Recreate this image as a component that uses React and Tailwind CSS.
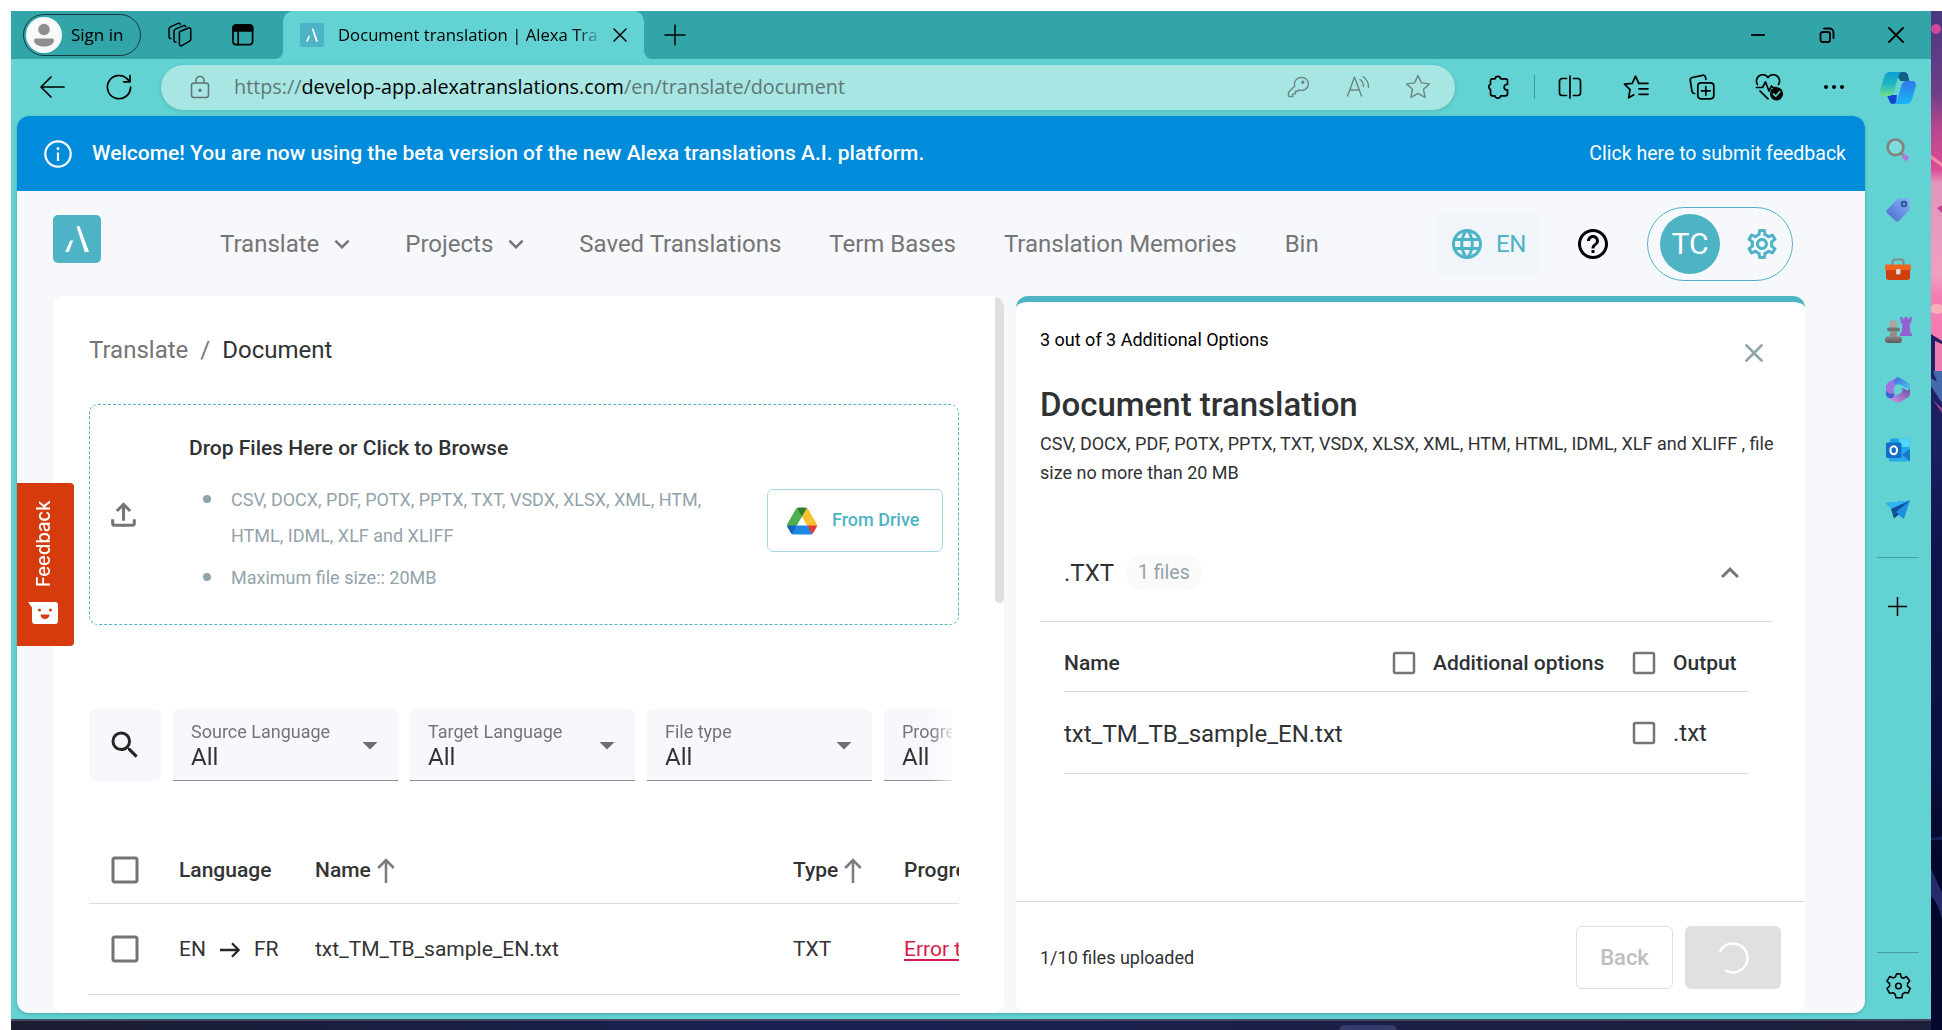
import {
  MdExpandMore, MdExpandLess, MdLanguage, MdHelpOutline, MdOutlineSettings, MdSearch,
  MdArrowDropDown, MdCheckBoxOutlineBlank, MdOutlineFileUpload, MdClose,
} from "react-icons/md";

/* ---------- browser chrome icons ---------- */

function Ico({ w = 24, h = 24, box, sw = 1.5, className = "", children }) {
  return (
    <svg
      width={w}
      height={h}
      viewBox={box || `0 0 ${w} ${h}`}
      fill="none"
      stroke="currentColor"
      strokeWidth={sw}
      strokeLinecap="round"
      strokeLinejoin="round"
      className={"shrink-0 " + className}
    >
      {children}
    </svg>
  );
}

const Workspaces = () => (
  <Ico w={26} h={26} className="ml-[26px]">
    <path d="M13 9.500 21.500 6a1.600 1.600 0 0 1 2.300 1.500v9.400a2.600 2.600 0 0 1-1.600 2.400l-7.400 4.300a1.600 1.600 0 0 1-2.400-1.400V11.900a2.600 2.600 0 0 1 .6-2.400Z" />
    <path d="M9 20a1.600 1.600 0 0 1-2-1.600V9.400a2.600 2.600 0 0 1 1.500-2.300L16.500 3.600a1.800 1.800 0 0 1 2.300 1" />
    <path d="M3.800 16.600A1.600 1.600 0 0 1 2 15V7.200a2.600 2.600 0 0 1 1.400-2.300L11 1.400a1.800 1.800 0 0 1 2.300.8" />
  </Ico>
);

const TabActions = () => (
  <Ico w={24} h={24} className="ml-[38px]" sw={1.7}>
    <rect x="2" y="2" width="19.600" height="19.600" rx="3.200" />
    <path d="M2 7.800V5a3 3 0 0 1 3-3h13.600a3 3 0 0 1 3 3v2.800Z" fill="currentColor" />
    <path d="M7.200 8v13.600" />
  </Ico>
);

function AlexaMark({ size }) {
  return (
    <svg width={size} height={size} viewBox="0 0 48 48" className="shrink-0">
      <rect width="48" height="48" rx="5" fill="#4fb3c6" />
      <path d="M23.400 11.200h3.200L36 37h-4.200ZM17.200 25.500h3L15.800 37h-3.600Z" fill="#fff" />
    </svg>
  );
}

function TabBar() {
  return (
    <div className="flex h-[48px] shrink-0 items-center bg-[#31a5a8] font-['Open_Sans',sans-serif] text-black">
      <div className="ml-[12px] flex h-[42px] w-[118px] items-center rounded-full border-[1.5px] border-[#14383a] pl-[2px]">
        <svg width="36" height="36" viewBox="0 0 36 36" className="shrink-0">
          <circle cx="18" cy="18" r="18" fill="#fafafa" />
          <circle cx="18" cy="12.500" r="5.800" fill="#8f8f8f" />
          <path d="M9.500 21.500h17a1.500 1.500 0 0 1 1.500 1.500c0 4-4 6.500-10 6.500S8 27 8 23a1.500 1.500 0 0 1 1.500-1.500Z" fill="#8f8f8f" />
        </svg>
        <span className="ml-[9px] text-[17px] whitespace-nowrap">Sign in</span>
      </div>
      <Workspaces />
      <TabActions />
      <div className="relative ml-[28px] flex h-full w-[361px] items-center rounded-t-[10px] bg-[#62d2d2] pl-[17px]">
        <svg className="absolute bottom-0 left-[-8px]" width="8" height="8"><path d="M8 0v8H0A8 8 0 0 0 8 0Z" fill="#62d2d2" /></svg>
        <svg className="absolute right-[-8px] bottom-0" width="8" height="8"><path d="M0 0v8h8A8 8 0 0 1 0 0Z" fill="#62d2d2" /></svg>
        <AlexaMark size={24} />
        <span className="ml-[14px] w-[261px] overflow-hidden text-[16.700px] whitespace-nowrap [mask-image:linear-gradient(to_right,black_238px,transparent_264px)]">
          Document translation | Alexa Translations
        </span>
        <Ico w={14} h={14} className="ml-[14px]"><path d="m1 1 12 12M13 1 1 13" /></Ico>
      </div>
      <Ico w={22} h={22} className="ml-[20px]"><path d="M11 1v20M1 11h20" /></Ico>
      <div className="mr-[27px] ml-auto flex items-center gap-[53px]">
        <Ico w={16} h={16} sw={1.800}><path d="M1 8h14" strokeLinecap="butt" /></Ico>
        <Ico w={16} h={16} sw={1.800}>
          <rect x="1.500" y="5" width="9.500" height="10" rx="2" />
          <path d="M5 1.500h5.500a4 4 0 0 1 4 4V11" />
        </Ico>
        <Ico w={16} h={16} sw={1.800}><path d="m1 1 14 14M15 1 1 15" /></Ico>
      </div>
    </div>
  );
}

const STAR = "M12 1.500l3.200 6.700 7.300.9-5.400 5 1.400 7.400L12 17.900l-6.500 3.600 1.400-7.400-5.400-5 7.300-.9Z";

function Toolbar() {
  return (
    <div className="flex h-[57px] shrink-0 items-center bg-[#62d2d2] pb-px font-['Open_Sans',sans-serif] text-black">
      <Ico w={26} h={24} className="ml-[28px]" sw={1.700}><path d="M25 12H2M12 2 2 12l10 10" /></Ico>
      <Ico w={26} h={26} className="ml-[41px]" sw={1.700}>
        <path d="M24.600 13A11.600 11.600 0 1 1 21 4.700l2.800 2.900M24 1.500v6.300h-6.300" />
      </Ico>
      <div className="ml-[29px] flex h-[45px] w-[1294px] items-center rounded-full bg-[#a8e6e4] pl-[29px] text-[#5f7776] shadow-[0_1px_4px_rgba(0,80,80,0.18)]">
        <Ico w={20} h={24} sw={1.600}>
          <rect x="1.500" y="8" width="17" height="14.500" rx="2.500" />
          <path d="M6 8V5.500a4 4 0 0 1 8 0V8" />
          <circle cx="10" cy="15.200" r=".9" fill="currentColor" />
        </Ico>
        <span className="ml-[24px] text-[19.800px] whitespace-nowrap">
          https://<span className="text-black">develop-app.alexatranslations.com</span>/en/translate/document
        </span>
        <div className="mr-[24px] ml-auto flex items-center text-[#6d8584]">
          <Ico w={22} h={22} box="0 0 22 22" sw={1.400}>
            <path d="M14 1.500a6.500 6.500 0 0 0-6.200 8.400L1.500 16.200v3.300c0 .6.400 1 1 1h3.300v-2.600h2.600v-2.600h2.200l1.500-1.500A6.500 6.500 0 1 0 14 1.500Z" />
            <circle cx="15.800" cy="6.200" r="1" fill="currentColor" />
          </Ico>
          <Ico w={25} h={24} className="ml-[37px]" sw={1.400}>
            <path d="m1.500 21 7-19 7 19M4 15h9" />
            <path d="M14 4.500a9 9 0 0 1 3.500 7M17 1.500a13 13 0 0 1 5.500 11" />
          </Ico>
          <Ico w={26} h={26} box="0 0 24 24" className="ml-[34px]" sw={1.300}><path d={STAR} /></Ico>
        </div>
      </div>
      <Ico w={24} h={26} className="ml-[31px]" sw={1.700}>
        <path d="M6 4.800h3a2.900 2.900 0 0 1 5.700 0h4.800a2 2 0 0 1 2 2v3.700h-1.200a2.700 2.700 0 0 0 0 5.300h1.200v4a2 2 0 0 1-2 2h-4.800a2.900 2.900 0 0 1-5.700 0H6.500a2 2 0 0 1-2-2v-4.300a2.900 2.900 0 0 1 0-5.300V6.800a2 2 0 0 1 1.500-2Z" />
      </Ico>
      <div className="ml-[24px] h-[24px] w-px bg-[#3f9c9e]" />
      <Ico w={24} h={24} className="ml-[23px]" sw={1.700}>
        <path d="M12 1v22M8.500 3.500H4.200A2.700 2.700 0 0 0 1.500 6.200v11.600a2.700 2.700 0 0 0 2.700 2.700h4.300M15.500 3.500h4.300a2.700 2.700 0 0 1 2.700 2.700v11.600a2.700 2.700 0 0 1-2.700 2.700h-4.300" />
      </Ico>
      <Ico w={26} h={26} className="ml-[41px]" sw={1.700}>
        <path d="M16 9.300h-.2L12.500 2.200 9.300 9.300l-7.800.9 5.500 5.500L5.600 23.800l5.300-3" />
        <path d="M15.500 9.300H25M16 14.800h9M16 20.300h9" />
      </Ico>
      <Ico w={26} h={26} className="ml-[40px]" sw={1.700}>
        <rect x="8.800" y="8.800" width="16" height="16" rx="3.200" />
        <path d="M16.800 12.500v8.600M12.500 16.800h8.600M5.500 19.500c-1.500 0-2.200-.8-2.500-2L1.300 6.500C1.100 5 1.800 3.800 3.400 3.500l10-2.200c1.500-.3 2.700.4 3.100 1.900l.4 2.200" />
      </Ico>
      <Ico w={29} h={27} className="ml-[40px]" sw={1.700}>
        <path d="M2.500 10.500a6 6 0 0 1 10.500-7 6 6 0 0 1 10.500 7M1.500 13.500h6l3-5.500 3.500 9 2.500-5 1.500 1.500h3M5 17l8 7.800" />
        <circle cx="21.500" cy="19.800" r="6.600" fill="currentColor" stroke="none" />
        <path d="m18.500 20 2.200 2.200 4-4.500" stroke="#62d2d2" />
      </Ico>
      <svg width="22" height="6" viewBox="0 0 22 6" className="ml-[39px] shrink-0">
        <circle cx="3" cy="3" r="2" /><circle cx="11" cy="3" r="2" /><circle cx="19" cy="3" r="2" />
      </svg>
    </div>
  );
}

/* ---------- browser side bar ---------- */

const SidebarCell = ({ children }) => <div className="flex h-[60px] w-full shrink-0 items-center justify-center">{children}</div>;

function Sidebar() {
  return (
    <div className="flex w-[66px] shrink-0 flex-col items-center bg-[#62d2d2]">
      <div className="mb-px flex h-[60px] w-full shrink-0 items-center justify-center pb-[3px]">
        <svg width="38" height="34" viewBox="0 0 38 34">
          <defs>
            <linearGradient id="cpA" x1="0" y1="0" x2="0" y2="1">
              <stop offset="0" stopColor="#0e9ed6" /><stop offset=".5" stopColor="#1fb5c0" /><stop offset="1" stopColor="#6fe08c" />
            </linearGradient>
            <linearGradient id="cpB" x1="0" y1="0" x2="0" y2="1">
              <stop offset="0" stopColor="#2f7be8" /><stop offset="1" stopColor="#18b4f8" />
            </linearGradient>
          </defs>
          <path d="M16 1h9c2.500 0 3.500 1.500 4.200 4l1.200 5h-9Z" fill="#0f5f86" />
          <path d="M8 24h10l-1 9h-3c-2 0-3-1-3.700-3Z" fill="#1546d2" />
          <path d="M11 1h12c-2.500.5-3.500 3-4.300 6l-3.500 13c-.9 3.500-2.500 5-5.700 5H4.500C1.500 25 .5 22.500 1.200 19.500L5 6C6 2.500 8 1 11 1Z" fill="url(#cpA)" />
          <path d="M27 33H14.500c2.500-.5 3.500-3 4.300-6l3.500-12c.9-3.500 2.500-5 5.700-5h5.500c3 0 4 2.500 3.300 5.500L33 28c-1 3.500-3 5-6 5Z" fill="url(#cpB)" />
        </svg>
      </div>
      <SidebarCell>
        <svg width="26" height="26" viewBox="0 0 26 26" className="-mt-px">
          <path d="m16 16 2.500 2.500" stroke="#8a8a8a" strokeWidth="2.500" />
          <circle cx="10.500" cy="10.300" r="7.800" fill="#7fdcdc" stroke="#85807d" strokeWidth="2.600" />
          <path d="m18.500 18.500 4 4" stroke="#b574e0" strokeWidth="5" />
        </svg>
      </SidebarCell>
      <SidebarCell>
        <svg width="26" height="26" viewBox="0 0 26 26">
          <defs><linearGradient id="tag" x1="1" y1="0" x2="0" y2="1"><stop stopColor="#8cb4fa" /><stop offset="1" stopColor="#4868cc" /></linearGradient></defs>
          <path d="M14 1.500 23 1c1.300 0 2 .7 2 2l-.5 9c0 1-.3 1.500-1 2.200l-9.800 9.900c-1 1-2 1-3 0L2 16c-1-1-1-2 0-3L11.800 2.600c.7-.7 1.200-1 2.200-1.100Z" fill="url(#tag)" />
          <circle cx="19" cy="7" r="2.400" fill="#62a9e0" stroke="#23508c" strokeWidth="1.700" />
        </svg>
      </SidebarCell>
      <SidebarCell>
        <svg width="28" height="24" viewBox="0 0 28 24">
          <path d="M8.500 7.500v-3a3 3 0 0 1 3-3h5a3 3 0 0 1 3 3v3" fill="none" stroke="#7f8b8b" strokeWidth="2" />
          <path d="M2 11h24v8.500c0 1.500-1 2.500-2.500 2.500h-19C3 22 2 21 2 19.500Z" fill="#cf3f0c" />
          <path d="M2.500 6.500h23c1 0 1.500.6 1.500 1.500v4H1V8c0-.9.500-1.500 1.500-1.500Z" fill="#f0641e" />
          <rect x="12" y="11" width="4.500" height="5.500" rx="1.500" fill="#dcdcdc" />
        </svg>
      </SidebarCell>
      <SidebarCell>
        <svg width="28" height="28" viewBox="0 0 28 28">
          <defs><linearGradient id="pawn" x1="0" y1="0" x2="0" y2="1"><stop stopColor="#8a8583" /><stop offset="1" stopColor="#5f5b5a" /></linearGradient></defs>
          <path d="M16 1h2.500v1.800h2V1h3v1.800h2V1H28l-1 6-1.500 1 .7 8c1.200.5 1.800 1.500 1.800 4H16c0-2.500.6-3.500 1.800-4l.7-8L17 7Z" fill="#9460cf" />
          <circle cx="9.500" cy="8.300" r="4.300" fill="#aaa5a2" />
          <rect x="3" y="11.500" width="13" height="4" rx="2" fill="#777372" />
          <path d="M6.500 15h6l.8 6H5.700Z" fill="#938e8c" />
          <rect x="1" y="20.500" width="17" height="6.500" rx="3" fill="url(#pawn)" />
        </svg>
      </SidebarCell>
      <SidebarCell>
        <svg width="26" height="28" viewBox="0 0 26 28">
          <defs>
            <linearGradient id="mA" x1="0" y1="0" x2="0" y2="1"><stop stopColor="#9a6ee0" /><stop offset="1" stopColor="#a97be6" /></linearGradient>
            <linearGradient id="mB" x1="0" y1="0" x2="1" y2="1"><stop stopColor="#3b6fe0" /><stop offset="1" stopColor="#55c9f2" /></linearGradient>
            <linearGradient id="mC" x1="1" y1="0" x2="0" y2="1"><stop stopColor="#6a4c9c" /><stop offset="1" stopColor="#d49af0" /></linearGradient>
          </defs>
          <path d="M13 1 4 6C2 7.200 1 8.500 1 10.500v8L8 22c1.500-1 1.500-2 1.500-4V9Z" fill="url(#mA)" />
          <path d="m13 1 9 5c2 1.200 3 2.500 3 4.500v5c-1-2-2-2.500-3.500-3.300L16 9c-2-1-4-1-6.500.5V7C9.500 4 10.500 2 13 1Z" fill="url(#mB)" />
          <path d="M25 11v6.500c0 2-1 3.300-3 4.500l-7 4.200c-1.500.8-3 .8-4.500 0L2.500 21.500c2 1 4 .8 6-.5l7-4c2-1.300 2-3 1-5.500l5 2.500c2 1 3 0 3.500-3Z" fill="url(#mC)" />
          <path d="M1 14c1 3 4 4.500 8.500 3.500 0 2-.5 3-1.500 4.300-2 .7-4 .5-5.500-.5C1.500 20.500 1 19.500 1 17.500Z" fill="#3a62d6" />
          <circle cx="13" cy="13.500" r="4.300" fill="#62d2d2" />
        </svg>
      </SidebarCell>
      <SidebarCell>
        <svg width="26" height="26" viewBox="0 0 26 26">
          <path d="M6 1.500h17c.8 0 1.500.6 1.500 1.500v9H5V2.500c0-.6.400-1 1-1Z" fill="#1fa3e8" />
          <path d="M14 1.500h9c.8 0 1.500.6 1.500 1.500v7H14Z" fill="#4fd6fa" />
          <path d="M4 12h21v11c0 .8-.6 1.500-1.500 1.500h-18C4.600 24.500 4 23.800 4 23Z" fill="#28aaea" />
          <path d="m25 12-8 5.500 8 6.500Z" fill="#1278cc" />
          <rect x="1" y="5.500" width="15.500" height="15.500" rx="1.800" fill="#0f6fc8" />
          <ellipse cx="8.700" cy="13.200" rx="3.300" ry="3.900" fill="none" stroke="#fff" strokeWidth="2.100" />
        </svg>
      </SidebarCell>
      <SidebarCell>
        <svg width="26" height="20" viewBox="0 0 26 20">
          <path d="M.5 3 25 .5 19 19l-6.500-4.500Z" fill="#1c90e0" />
          <path d="M.5 3 25 .5 6 9Z" fill="#32b6f2" />
          <path d="M25 .5 6 9l3 9.500 2-6.500Z" fill="#0f4f94" />
          <path d="m9 18.500 4.500-4L11 12Z" fill="#0a3a72" />
        </svg>
      </SidebarCell>
      <div className="mt-[17px] h-px w-[42px] bg-[#459fa2]" />
      <Ico w={19} h={19} className="mt-[39px] mr-[2px]"><path d="M9.500 0v19M0 9.500h19" /></Ico>
      <div className="mt-auto h-px w-[42px] bg-[#459fa2]" />
      <Ico w={27} h={28} box="0 0 24 24" className="mt-[19px] mb-[19px]" sw={1.400}>
        <circle cx="12" cy="12" r="2.500" />
        <path d="M10.300 1.200h3.400l.7 3 2 .9 2.700-1.500 2.900 4-2 2.300v2.200l2.400 2-1.700 4-3.200-.3-1.900 1.300-.6 3.400h-5.200l-.8-3.300-1.800-1.200-3.200.4-2.300-4.200 2.400-2.100v-2.200L1.700 7.700 4.300 3.500l3 1.300 2-.9Z" />
      </Ico>
    </div>
  );
}

/* ---------- web page ---------- */

const NAV = [
  { label: "Translate", menu: true },
  { label: "Projects", menu: true },
  { label: "Saved Translations" },
  { label: "Term Bases" },
  { label: "Translation Memories" },
  { label: "Bin" },
];

function Banner() {
  return (
    <div className="flex h-[75px] shrink-0 items-center bg-[#008bdb] text-white">
      <svg width="28" height="28" viewBox="0 0 28 28" className="ml-[27px] shrink-0">
        <circle cx="14" cy="14" r="12.700" fill="none" stroke="#fff" strokeWidth="2.200" />
        <path d="M14 12.500V21" stroke="#fff" strokeWidth="2.200" />
        <circle cx="14" cy="8.500" r="1.500" fill="#fff" />
      </svg>
      <span className="ml-[20px] text-[21px] font-medium tracking-[0.01px]">
        Welcome! You are now using the beta version of the new Alexa translations A.I. platform.
      </span>
      <span className="mr-[19px] ml-auto text-[19.500px]">Click here to submit feedback</span>
    </div>
  );
}

function Header() {
  return (
    <header className="flex h-[105px] shrink-0 items-center pr-[72px] pl-[36px] text-[24px] text-[#757575]">
      <div className="mt-[24px] self-start"><AlexaMark size={48} /></div>
      <nav className="ml-[119px] flex items-center gap-12">
        {NAV.map(({ label, menu }) => (
          <a key={label} className="flex items-center whitespace-nowrap">
            {label}
            {menu && <MdExpandMore className="ml-2 size-[30px]" />}
          </a>
        ))}
      </nav>
      <div className="ml-auto flex h-[60px] w-[103px] items-center rounded-md bg-[#eff5f9] pl-[13px] text-[#4fb3c6]">
        <MdLanguage className="size-[36px]" />
        <span className="ml-[11px] tracking-[-0.5px]">EN</span>
      </div>
      <MdHelpOutline className="mx-[36px] size-[36px] text-black" />
      <div className="flex h-[74px] w-[146px] items-center rounded-full border-[1.500px] border-[#4fb3c6] pl-[12px] text-[#4fb3c6]">
        <div className="flex size-[60px] items-center justify-center rounded-full bg-[#4fb3c6] text-[30px] text-white">TC</div>
        <MdOutlineSettings className="ml-[24px] size-[36px]" />
      </div>
    </header>
  );
}

const SortArrow = ({ className }) => (
  <svg width="18" height="26" viewBox="0 0 18 26" fill="none" stroke="#7d7d7d" strokeWidth="2.600" className={"shrink-0 " + className}>
    <path d="M9 25V2.500M1.200 10 9 2.200l7.800 7.800" />
  </svg>
);

function Select({ label }) {
  return (
    <div className="flex h-full w-[225px] shrink-0 items-center justify-between rounded-t-md border-b-[1.500px] border-[#8b8b90] bg-[#f7f8fc] pr-[10px] pl-[18px]">
      <div>
        <div className="h-[24px] text-[18px] leading-[24px] whitespace-nowrap text-[#757575]">{label}</div>
        <div className="h-[26px] text-[24px] leading-[26px] text-[#333]">All</div>
      </div>
      <MdArrowDropDown className="mt-px size-[36px] text-[#6f6f6f]" />
    </div>
  );
}

function DriveIcon() {
  return (
    <svg width="36" height="36" viewBox="0 0 48 48" className="shrink-0">
      <path fill="#1e88e5" d="M38.590 39c-.535.930-.298 1.680-1.195 2.197-.897.518-1.930.803-3.005.803H13.610c-1.074 0-2.106-.285-3.004-.802C9.708 40.681 9.945 39.930 9.410 39l7.670-9h13.840Z" />
      <path fill="#fbc02d" d="M27.463 6.999c1.073-.002 2.104-.716 3.001-.198.897.519 1.660 1.270 2.197 2.201l10.390 17.996c.537.930.807 1.967.808 3.002.001 1.037-1.267 2.073-1.806 3.001l-11.127-3.005-6.924-11.993Z" />
      <path fill="#e53935" d="M43.860 30c0 1.040-.270 2.070-.810 3l-3.670 6.350c-.530.780-1.210 1.400-1.990 1.850L30.920 30Z" />
      <path fill="#4caf50" d="M5.947 33.001c-.538-.928-1.806-1.964-1.806-3 .001-1.036.270-2.073.808-3.004l10.390-17.996c.537-.930 1.300-1.682 2.196-2.200.897-.519 1.929.195 3.002.197l3.459 11.009-6.922 11.989Z" />
      <path fill="#1565c0" d="m17.080 30-6.470 11.200c-.780-.450-1.460-1.070-1.990-1.850L4.950 33c-.540-.930-.810-1.960-.810-3Z" />
      <path fill="#2e7d32" d="M30.460 6.800 24 18 17.530 6.800c.780-.450 1.660-.730 2.600-.790L27.460 6c1.080 0 2.110.280 3 .800Z" />
    </svg>
  );
}

const Bullet = ({ children }) => (
  <li className="flex">
    <span className="mt-[13px] mr-[20px] size-[8px] shrink-0 rounded-full bg-[#90a4ae]" />
    <span className="w-[490px]">{children}</span>
  </li>
);

function DocumentPanel() {
  return (
    <section className="flex w-[951px] shrink-0 overflow-hidden rounded-[12px] bg-white">
      <div className="ml-[36px] w-[870px] shrink-0 pt-[36px]">
        <div className="flex h-[36px] items-center text-[24px] text-[#757575]">
          Translate <span className="mx-[12px]">/</span> <span className="text-[#2f3234]">Document</span>
        </div>

        <div className="mt-[36px] flex h-[221px] items-center rounded-[9px] border border-dashed border-[#4fb3c6] pr-[15px] pl-[15px]">
          <MdOutlineFileUpload className="size-[37px] shrink-0 text-[#757575]" />
          <div className="ml-[47px] self-start pt-[25px]">
            <div className="h-[36px] text-[21px] leading-[36px] font-medium text-[#2f3234]">Drop Files Here or Click to Browse</div>
            <ul className="mt-[16px] ml-[14px] text-[18px] leading-[36px] text-[#93a3ab]">
              <Bullet>CSV, DOCX, PDF, POTX, PPTX, TXT, VSDX, XLSX, XML, HTM, HTML, IDML, XLF and XLIFF</Bullet>
              <div className="h-[6px]" />
              <Bullet>Maximum file size:: 20MB</Bullet>
            </ul>
          </div>
          <button className="mt-[12px] ml-auto flex h-[63px] w-[176px] items-center rounded-md border-[1.500px] border-[#a7d9e3] pl-[16px] text-[18px] font-medium text-[#4fb3c6]">
            <DriveIcon />
            <span className="ml-[12px] pb-[2px]">From Drive</span>
          </button>
        </div>

        <div className="mt-[84px] flex h-[72px] w-[863px] gap-[12px] overflow-hidden [mask-image:linear-gradient(to_right,black_842px,transparent_868px)]">
          <div className="flex w-[72px] shrink-0 items-center justify-center rounded-md bg-[#f7f8fc]">
            <MdSearch className="size-[36px] text-[#262626]" />
          </div>
          {["Source Language", "Target Language", "File type", "Progress"].map((l) => <Select key={l} label={l} />)}
        </div>

        <div className="mt-[56px] overflow-hidden text-[21px] text-[#333]">
          <div className="grid h-[67px] grid-cols-[90px_136px_478px_111px_1fr] items-center border-b border-[#dcdcdc] font-medium">
            <MdCheckBoxOutlineBlank className="ml-[18px] size-[36px] text-[#757575]" />
            <span className="pt-px">Language</span>
            <span className="flex items-center pt-px">Name<SortArrow className="ml-[6px]" /></span>
            <span className="flex items-center pt-px">Type<SortArrow className="ml-[6px]" /></span>
            <span className="pt-px">Progress</span>
          </div>
          <div className="grid h-[91px] grid-cols-[90px_136px_478px_111px_1fr] items-center border-b border-[#dcdcdc]">
            <MdCheckBoxOutlineBlank className="ml-[18px] size-[36px] text-[#757575]" />
            <span className="flex items-center pt-px">
              EN
              <svg width="20" height="16" viewBox="0 0 20 16" fill="none" stroke="#262626" strokeWidth="2.300" className="mx-[14px]">
                <path d="M0 8h18.500M12 1.200 18.700 8 12 14.800" />
              </svg>
              FR
            </span>
            <span className="pt-px">txt_TM_TB_sample_EN.txt</span>
            <span className="pt-px">TXT</span>
            <span className="pt-px whitespace-nowrap text-[#d81b4a] underline underline-offset-[3px]">Error translating</span>
          </div>
        </div>
      </div>
      <div className="ml-auto h-[307px] w-[9px] rounded-full bg-[#dfdfdf]" />
    </section>
  );
}

const SmallBox = () => <MdCheckBoxOutlineBlank className="size-[30px] shrink-0 text-[#757575]" />;

function OptionsPanel() {
  return (
    <section className="ml-[12px] flex w-[789px] shrink-0 flex-col overflow-hidden rounded-[12px] border-t-[6px] border-[#4fb3c6] bg-white text-[#2f3234]">
      <div className="w-[769px] pt-[20px] pl-[24px]">
        <div className="flex items-start justify-between">
          <div className="h-[36px] text-[18px] leading-[36px] text-black">3 out of 3 Additional Options</div>
          <MdClose className="mt-[15px] mr-[15px] -mb-[15px] size-[32px] text-[#90a4ae]" />
        </div>
        <h1 className="mt-[27px] h-[40px] text-[33px] leading-[40px] font-medium">Document translation</h1>
        <p className="mt-[4px] h-[58px] text-[18px] leading-[29px]">
          CSV, DOCX, PDF, POTX, PPTX, TXT, VSDX, XLSX, XML, HTM, HTML, IDML, XLF and XLIFF , file size no more than 20 MB
        </p>
      </div>

      <div className="mt-[37px] ml-[24px] flex h-[98px] w-[732px] items-center border-b border-[#dcdcdc] pr-[24px] pl-[24px]">
        <span className="text-[24px]">.TXT</span>
        <span className="ml-[12px] flex h-[36px] items-center rounded-full bg-[#fafafa] px-[12px] pt-px text-[19.500px] text-[#93a3ab]">1 files</span>
        <MdExpandLess className="ml-auto size-[36px] text-[#757575]" />
      </div>

      <div className="ml-[48px] w-[684px]">
        <div className="flex h-[70px] items-center border-b border-[#dcdcdc] pt-[13px] text-[21px] font-medium">
          <span className="flex-1 pt-[2px]">Name</span>
          <div className="flex w-[240px] items-center"><SmallBox /><span className="ml-[14px] pt-px">Additional options</span></div>
          <div className="flex w-[119px] items-center"><SmallBox /><span className="ml-[14px] pt-px">Output</span></div>
        </div>
        <div className="flex h-[82px] items-center border-b border-[#dcdcdc] text-[24px]">
          <span className="flex-1 pt-[2px]">txt_TM_TB_sample_EN.txt</span>
          <div className="flex w-[119px] items-center"><SmallBox /><span className="ml-[14px]">.txt</span></div>
        </div>
      </div>

      <div className="mt-auto flex h-[112px] shrink-0 items-center border-t border-[#dcdcdc] pr-[24px] pl-[24px]">
        <span className="pb-px text-[18px]">1/10 files uploaded</span>
        <button className="ml-auto flex h-[63px] w-[97px] items-center justify-center rounded-md border-[1.500px] border-[#e0e0e0] text-[22px] font-medium text-[#bdbdbd]">Back</button>
        <button className="ml-[12px] flex h-[63px] w-[96px] items-center justify-center rounded-md bg-[#e0e0e0]">
          <svg width="36" height="36" viewBox="-18 -18 36 36" fill="none" stroke="#fff" strokeWidth="2.500" className="mt-px">
            <path d="M-13.100-6.200A14.500 14.500 0 1 1-7.700 12.300" />
          </svg>
        </button>
      </div>
    </section>
  );
}

function FeedbackTab() {
  return (
    <div className="absolute top-[367px] left-0 flex h-[163px] w-[57px] flex-col items-center rounded-r-[4px] bg-[#d53b0d] pt-[16px]">
      <span className="mr-[5px] h-[88px] rotate-180 font-['Inter',sans-serif] text-[18.500px] leading-[24px] font-medium text-white [writing-mode:vertical-rl]">Feedback</span>
      <svg width="30" height="22" viewBox="0 0 30 22" className="mt-[15px] mr-[5px]">
        <path d="M0 0h27a3 3 0 0 1 3 3v16a3 3 0 0 1-3 3H7a3 3 0 0 1-3-3V5.500Z" fill="#fff" />
        <circle cx="11.500" cy="8" r="1.500" fill="#d53b0d" />
        <circle cx="22.500" cy="8" r="1.500" fill="#d53b0d" />
        <path d="M12.500 12.500h9a4.500 4.500 0 0 1-9 0Z" fill="#d53b0d" />
      </svg>
    </div>
  );
}

/* Desktop wallpaper visible to the right of the window */
function Wallpaper() {
  return (
    <svg width="11" height="1019" viewBox="0 11 11 1019" preserveAspectRatio="none" className="shrink-0">
      <defs>
        <linearGradient id="sky" x1="0" y1="0" x2="0" y2="1">
          <stop offset="0" stopColor="#4a377e" /><stop offset=".25" stopColor="#6f3f87" />
          <stop offset=".35" stopColor="#b5478d" /><stop offset=".48" stopColor="#dd4c96" /><stop offset=".52" stopColor="#e295bd" />
          <stop offset=".8" stopColor="#efa0c0" /><stop offset=".86" stopColor="#f47fb4" /><stop offset="1" stopColor="#f67bb0" />
        </linearGradient>
        <linearGradient id="night" x1="0" y1="0" x2="0" y2="1">
          <stop offset="0" stopColor="#231f63" /><stop offset=".15" stopColor="#1a2161" />
          <stop offset=".3" stopColor="#10144d" /><stop offset=".6" stopColor="#0b1040" /><stop offset=".75" stopColor="#04062a" /><stop offset="1" stopColor="#050930" />
        </linearGradient>
      </defs>
      <rect y="11" width="11" height="330" fill="url(#sky)" />
      <ellipse cx="5" cy="29" rx="5" ry="5" fill="#cc4a98" />
      <path d="M0 155 11 163v4L0 159Z" fill="#f28aa8" />
      <path d="m6 208 5-3v8Z" fill="#c8428c" />
      <ellipse cx="6" cy="309" rx="7" ry="5" fill="#f7b0b8" />
      <path d="M0 334 11 341v689H0Z" fill="url(#night)" />
      <path d="M4 341 11 344v27H4Z" fill="#ef7db2" />
      <path d="M2 371h9v32L0 386v-8l6 4Z" fill="#4668ad" />
      <path d="m2 400 9 13v-5Z" fill="#9a3f8e" />
      <path d="M0 868c5 12 8 18 11 24v28C8 906 4 900 0 896Z" fill="#262c6b" />
      <path d="m0 838 11-2v4H0Z" fill="#15205a" />
    </svg>
  );
}

export default function App() {
  return (
    <div className="flex h-[1030px] w-[1942px] overflow-hidden bg-white pt-[11px] pl-[11px] font-['Roboto',sans-serif]">
      <div className="flex w-[1920px] shrink-0 flex-col">
        <TabBar />
        <div className="flex h-[960px] shrink-0 bg-[#62d2d2]">
          <div className="flex w-[1854px] shrink-0 flex-col">
            <Toolbar />
            <main className="relative ml-[6px] flex h-[897px] flex-col overflow-hidden rounded-[12px] bg-[#f7f8fc] shadow-[0_1px_3px_rgba(0,60,60,0.3)]">
              <Banner />
              <Header />
              <div className="flex min-h-0 flex-1 pl-[36px]">
                <DocumentPanel />
                <OptionsPanel />
              </div>
              <FeedbackTab />
            </main>
          </div>
          <Sidebar />
        </div>
        <div className="flex flex-1 justify-end border-t-2 border-[#444b60] bg-linear-to-r from-[#1b1d31] via-[#1a1f52] via-40% to-[#1d1f3a]">
          <div className="mt-[4px] mr-[534px] h-[8px] w-[58px] rounded-t-md bg-[#343c6b]" />
        </div>
      </div>
      <Wallpaper />
    </div>
  );
}
